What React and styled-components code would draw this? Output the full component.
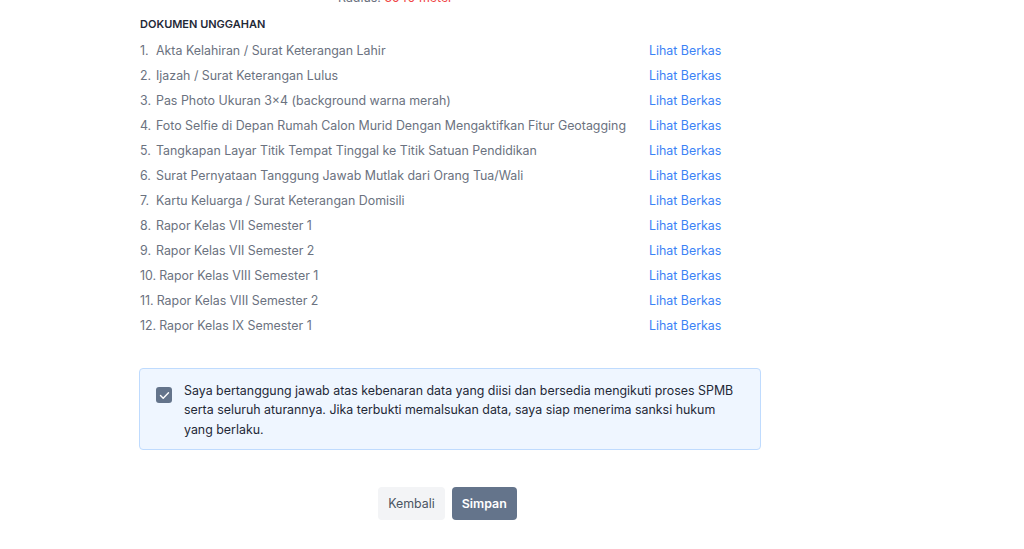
import React from "react";
import styled, { createGlobalStyle } from "styled-components";

const Global = createGlobalStyle`
  html, body { margin: 0; padding: 0; background: #ffffff; }
  body { font-family: Inter, "Noto Sans", sans-serif; -webkit-font-smoothing: antialiased; overflow: hidden; }
`;

const Page = styled.div`
  width: 622px;
  margin-left: 139px;
  margin-top: -10px;
`;

const RadiusLine = styled.div`
  font-size: 12.4px;
  line-height: 16px;
  color: #6b7280;
  padding-left: 199px;
`;

const Red = styled.span`
  color: #ef4444;
`;

const Heading = styled.h3`
  margin: 10px 0 0 1px;
  font-size: 11px;
  line-height: 16px;
  font-weight: 600;
  color: #1f2937;
  text-transform: uppercase;
`;

const List = styled.div`
  margin-top: 6px;
  padding-left: 1px;
  display: flex;
  flex-direction: column;
`;

const Row = styled.div`
  display: grid;
  grid-template-columns: 509px 1fr;
  height: 25px;
  align-items: center;
  font-size: 12.4px;
  color: #6b7280;
`;

const Label = styled.span`
  display: flex;
  white-space: nowrap;
`;

const Num = styled.span`
  min-width: 13px;
  margin-right: 3px;
`;

const Link = styled.a`
  color: #3b82f6;
  text-decoration: none;
  cursor: pointer;
`;

const Notice = styled.div`
  margin-top: 30px;
  display: flex;
  align-items: flex-start;
  gap: 12px;
  padding: 12px 16px 10px;
  background: #eff6ff;
  border: 1px solid #bfdbfe;
  border-radius: 4px;
`;

const Check = styled.span`
  flex: none;
  width: 16px;
  height: 16px;
  margin-top: 6px;
  border-radius: 3px;
  background: #64748b;
  display: flex;
  align-items: center;
  justify-content: center;
`;

const NoticeText = styled.p`
  margin: 0;
  font-size: 12.4px;
  line-height: 19.3px;
  color: #1f2937;
`;

const Actions = styled.div`
  margin-top: 37px;
  display: flex;
  justify-content: center;
  gap: 7px;
  padding-right: 5px;
`;

const Button = styled.button`
  height: 33px;
  padding: 0 10px;
  border: none;
  border-radius: 4px;
  font-family: inherit;
  font-size: 12.4px;
  cursor: pointer;
  background: ${(p) => (p.$primary ? "#64748b" : "#f3f4f6")};
  color: ${(p) => (p.$primary ? "#ffffff" : "#4b5563")};
  font-weight: ${(p) => (p.$primary ? 600 : 400)};
`;

const docs = [
  "Akta Kelahiran / Surat Keterangan Lahir",
  "Ijazah / Surat Keterangan Lulus",
  "Pas Photo Ukuran 3×4 (background warna merah)",
  "Foto Selfie di Depan Rumah Calon Murid Dengan Mengaktifkan Fitur Geotagging",
  "Tangkapan Layar Titik Tempat Tinggal ke Titik Satuan Pendidikan",
  "Surat Pernyataan Tanggung Jawab Mutlak dari Orang Tua/Wali",
  "Kartu Keluarga / Surat Keterangan Domisili",
  "Rapor Kelas VII Semester 1",
  "Rapor Kelas VII Semester 2",
  "Rapor Kelas VIII Semester 1",
  "Rapor Kelas VIII Semester 2",
  "Rapor Kelas IX Semester 1",
];

export default function App() {
  return (
    <>
      <Global />
      <Page>
        <RadiusLine>
          Radius: <Red>3540 meter</Red>
        </RadiusLine>
        <Heading>Dokumen Unggahan</Heading>
        <List>
          {docs.map((d, i) => (
            <Row key={i}>
              <Label>
                <Num>{i + 1}.</Num>
                {d}
              </Label>
              <Link>Lihat Berkas</Link>
            </Row>
          ))}
        </List>
        <Notice>
          <Check>
            <svg width="11" height="9" viewBox="0 0 11 9" fill="none">
              <path d="M1.5 4.6 L4.2 7.2 L9.5 1.8" stroke="#fff" strokeWidth="1.4" strokeLinecap="round" strokeLinejoin="round" />
            </svg>
          </Check>
          <NoticeText>
            Saya bertanggung jawab atas kebenaran data yang diisi dan bersedia mengikuti proses SPMB serta seluruh aturannya. Jika terbukti memalsukan data, saya siap menerima sanksi hukum yang berlaku.
          </NoticeText>
        </Notice>
        <Actions>
          <Button>Kembali</Button>
          <Button $primary>Simpan</Button>
        </Actions>
      </Page>
    </>
  );
}
